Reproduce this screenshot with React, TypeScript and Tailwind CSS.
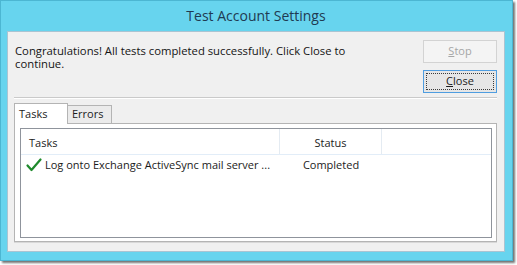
import React from 'react';

const font = { fontFamily: '"Open Sans", "Noto Sans", sans-serif' };

const CheckMark: React.FC = () => (
  <svg width="16" height="14" viewBox="0 0 16 14" className="shrink-0">
    <path d="M1.5 7.5 L5.5 12 L14.5 1.5" fill="none" stroke="#1f8a2c" strokeWidth="2.2" strokeLinecap="round" strokeLinejoin="round" />
  </svg>
);

const App: React.FC = () => {
  return (
    <div className="w-[517px] h-[265px] bg-white" style={font}>
      <div className="w-[513px] h-[261px] bg-[#67d4ee] border border-[#4cb6d2] flex flex-col pl-[6px] pr-[7px] pb-[8px] shadow-[2px_2px_2px_rgba(0,0,0,0.55)]">
        {/* title bar */}
        <div className="h-[30px] shrink-0 flex items-center justify-center text-[14px] text-[#1f3a52] pb-[1px]">
          Test Account Settings
        </div>

        {/* content */}
        <div className="flex-1 bg-[#f0f0f0] border border-[#aac4d2] flex flex-col pl-[6px] pr-[7px] pb-[9px] text-[11px] text-[#1b1b1b]">
          <div className="h-[65px] shrink-0 flex">
            <p className="w-[348px] pt-[12px] pl-[1px] leading-[13px] text-[11.3px] font-medium text-[#141414]">
              Congratulations! All tests completed successfully. Click Close to continue.
            </p>
            <div className="flex-1" />
            <div className="w-[74px] flex flex-col gap-[7px] pt-[8px]">
              <div className="h-[23px] border border-[#d3d3d3] bg-[#f4f4f4] flex items-center justify-center text-[#a6a6a6] font-medium">
                <span><span className="underline">S</span>top</span>
              </div>
              <div className="h-[23px] border border-[#4f9de0] bg-[#e6e6e6] p-[2px]">
                <div className="h-full border border-dotted border-[#3a3a3a] flex items-center justify-center font-medium">
                  <span><span className="underline">C</span>lose</span>
                </div>
              </div>
            </div>
          </div>

          {/* separator */}
          <div className="h-[2px] shrink-0 border-t border-[#cacaca] border-b border-b-white" />

          {/* tabs */}
          <div className="mt-[3px] h-[21px] shrink-0 flex items-end">
            <div className="h-[21px] w-[54px] border border-b-0 border-[#b4b4b4] bg-white flex items-center pl-[4px] font-medium relative top-[1px]">
              Tasks
            </div>
            <div className="h-[18px] w-[44px] border border-l-0 border-b-0 border-[#b4b4b4] bg-[#ebebeb] flex items-center pl-[4px] font-medium">
              Errors
            </div>
          </div>

          <div className="flex-1 border border-[#b4b4b4] bg-white pl-[5px] pr-[4px] pt-[4px] pb-[3px] shadow-[0_1px_0_#d8d8d8]">
            <div className="h-full border border-[#8f949c] bg-white flex flex-col">
              <div className="h-[26px] flex border-b border-[#e2edf8] font-medium">
                <div className="w-[259px] flex items-center pl-[8px] pt-[3px] border-r border-[#e4ebf2]">Tasks</div>
                <div className="w-[102px] flex items-center justify-center pt-[3px] border-r border-[#e4ebf2]">Status</div>
                <div className="flex-1" />
              </div>
              <div className="h-[20px] flex items-center font-medium">
                <div className="w-[259px] flex items-center pl-[5px] gap-[3px]">
                  <CheckMark />
                  <span className="whitespace-nowrap">Log onto Exchange ActiveSync mail server ...</span>
                </div>
                <div className="w-[102px] text-center">Completed</div>
              </div>
            </div>
          </div>
        </div>
      </div>
    </div>
  );
};

export default App;
